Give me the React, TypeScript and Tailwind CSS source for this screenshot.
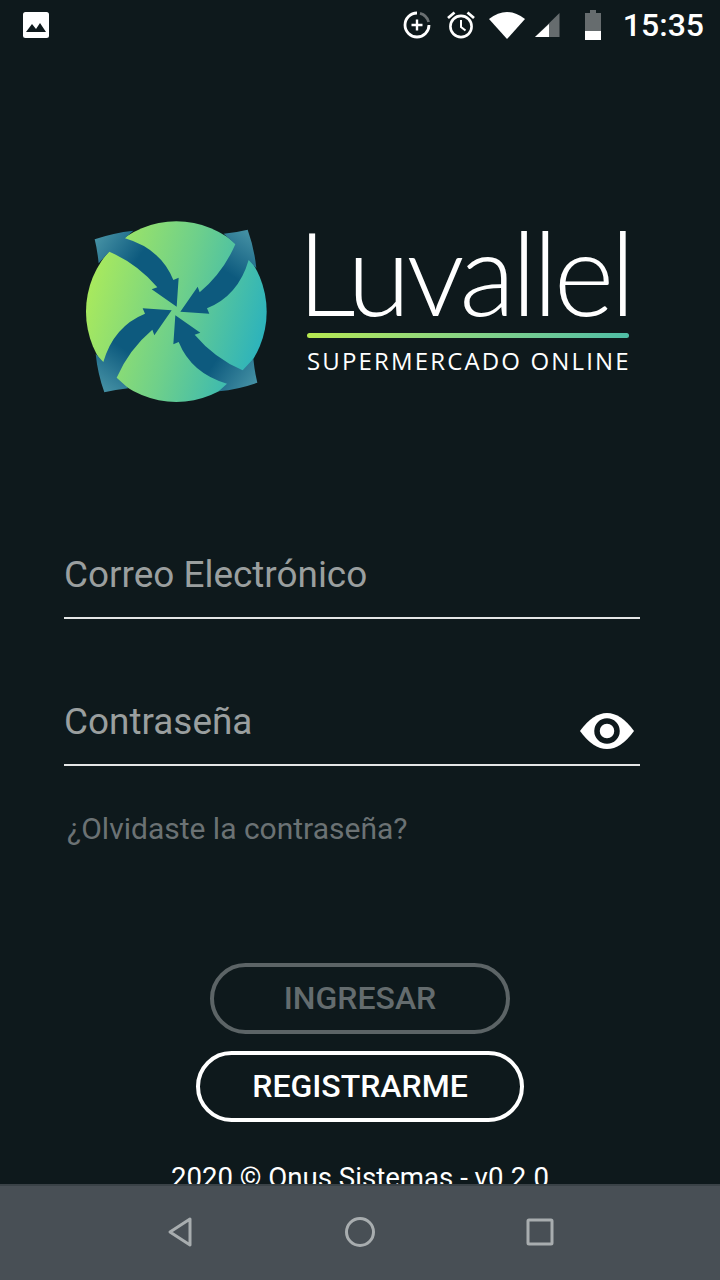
import React from "react";

const Mark = () => (
  <svg viewBox="0 0 630 600" className="w-[210px] h-[200px] block">
    <defs>
      <linearGradient id="globe" x1="48" y1="230" x2="590" y2="370" gradientUnits="userSpaceOnUse">
        <stop offset="0" stopColor="#aaea5c" />
        <stop offset="0.5" stopColor="#6fd08a" />
        <stop offset="1" stopColor="#2bb2bd" />
      </linearGradient>
      <linearGradient id="arrow" x1="85" y1="85" x2="195" y2="160" gradientUnits="userSpaceOnUse">
        <stop offset="0" stopColor="#438fa3" />
        <stop offset="1" stopColor="#0d5a7e" />
      </linearGradient>
    </defs>
    <circle cx="319" cy="305" r="271" fill="url(#globe)" />
    {[0, 90, 180, 270].map((r) => (
      <path
        key={r}
        transform={`rotate(${r} 318 303)`}
        fill="url(#arrow)"
        d="M74 88 Q130 68 190 62 L165 85 Q272 116 310 210 L326 203 L320 290 L245 238 L262 232 Q203 162 118 125 L86 160 Q82 120 74 88 Z"
      />
    ))}
  </svg>
);

const StatusIcons = () => (
  <div className="flex items-center">
    <svg viewBox="0 0 30 30" className="w-[30px] h-[30px]">
      <path d="M15 3 A12 12 0 1 0 27 15" fill="none" stroke="#fff" strokeWidth="2.8" />
      <path d="M18 3.4 A12 12 0 0 1 26.6 12" fill="none" stroke="#6a7072" strokeWidth="2.8" />
      <path d="M15 9.5v11M9.5 15h11" stroke="#fff" strokeWidth="2.4" />
    </svg>
    <svg viewBox="0 0 30 30" className="w-[30px] h-[30px] ml-[14px]">
      <circle cx="15" cy="16.5" r="10.6" fill="none" stroke="#fff" strokeWidth="2.6" />
      <path d="M15 10v7l4.5 3.5" fill="none" stroke="#fff" strokeWidth="2" />
      <path d="M2 8l6.5-5.5M28 8l-6.5-5.5" stroke="#fff" strokeWidth="2.8" />
    </svg>
    <svg viewBox="0 0 36 30" className="w-[36px] h-[30px] ml-[13px]">
      <path d="M0 9 Q18 -5 36 9 L18 29 Z" fill="#fff" />
    </svg>
    <svg viewBox="0 0 26 30" className="w-[26px] h-[30px] ml-[9px]">
      <path d="M25.5 3 V27 H1 Z" fill="#666c6e" />
      <path d="M15 14 V27 H1 Z" fill="#fff" />
    </svg>
    <svg viewBox="0 0 18 30" className="w-[18px] h-[30px] ml-[24px]">
      <path d="M6 0h6v3h5v27H1V3h5z" fill="#666c6e" />
      <rect x="1" y="21" width="16" height="9" fill="#fff" />
    </svg>
    <span className="ml-[21px] text-[32px] leading-none font-medium text-white">15:35</span>
  </div>
);

export default function App() {
  return (
    <div className="w-[720px] h-[1280px] flex flex-col bg-[#0e191c] overflow-hidden [font-family:Roboto,sans-serif]">
      <div className="h-[1184px] shrink-0 overflow-hidden">
        <div className="h-[50px] flex items-center justify-between pl-[23px] pr-[16px] pb-[1px]">
          <svg viewBox="0 0 26 26" className="w-[26px] h-[26px]">
            <rect width="26" height="26" rx="2.5" fill="#fff" />
            <path d="M3 20 L9 12 L13 17 L17 11 L23 20 Z" fill="#0e191c" />
          </svg>
          <StatusIcons />
        </div>

        <div className="mt-[160px] h-[200px] flex pl-[70px]">
          <Mark />
          <div className="ml-[27px] w-[322px] flex flex-col">
            <div className="h-[115px] -ml-[10px] mt-[4px] text-[116px] leading-[115px] font-light tracking-[-4.3px] text-white [font-family:Lato,sans-serif] whitespace-nowrap">Luvallel</div>
            <div className="h-[5px] rounded-full mt-[4px] bg-gradient-to-r from-[#b6e84f] to-[#4fbea6]" />
            <div className="mt-[8px] text-[24px] leading-[30px] text-white tracking-[2.15px] whitespace-nowrap [font-family:'Open_Sans',sans-serif]">SUPERMERCADO ONLINE</div>
          </div>
        </div>

        <div className="mt-[132px] pl-[64px] pr-[80px] flex flex-col">
          <div className="h-[77px] border-b-2 border-[#e4e6e6] flex items-start pt-[8px]">
            <span className="text-[36.9px] leading-[50px] text-[#9a9f9f]">Correo Electrónico</span>
          </div>
          <div className="mt-[70px] h-[77px] border-b-2 border-[#e4e6e6] flex items-start justify-between pt-[8px]">
            <span className="text-[36.9px] leading-[50px] text-[#9a9f9f]">Contraseña</span>
            <svg viewBox="0 0 56 38" className="w-[56px] h-[38px] mt-[15px] mr-[5px]">
              <path d="M1 19 Q14 1 28 1 Q42 1 55 19 Q42 37 28 37 Q14 37 1 19 Z" fill="#fff" />
              <circle cx="28" cy="19" r="10" fill="#fff" stroke="#0e191c" strokeWidth="5.5" />
            </svg>
          </div>
          <div className="mt-[43px] pl-[3px] text-[30px] leading-[40px] text-[#6b7274]">¿Olvidaste la contraseña?</div>
        </div>

        <div className="mt-[114px] flex flex-col items-center">
          <div className="w-[300px] h-[71px] pb-[2px] rounded-full border-[4px] border-[#5c6466] flex items-center justify-center text-[32px] font-medium text-[#646c6e]">INGRESAR</div>
          <div className="mt-[17px] w-[328px] h-[71px] pb-[2px] rounded-full border-[4px] border-white flex items-center justify-center text-[32px] font-medium text-white">REGISTRARME</div>
          <div className="mt-[40px] text-[27.6px] leading-[32px] text-white whitespace-nowrap">2020 © Onus Sistemas - v0.2.0</div>
        </div>
      </div>

      <div className="h-[96px] bg-[#484f55] border-t-2 border-[#3a4247] grid grid-cols-[180px_180px_180px] justify-center items-center justify-items-center pb-[2px]">
        <svg viewBox="0 0 28 32" className="w-[28px] h-[32px]">
          <path d="M24 3 L4 16 L24 29 Z" fill="none" stroke="#a8adaf" strokeWidth="3" strokeLinejoin="round" />
        </svg>
        <svg viewBox="0 0 32 32" className="w-[32px] h-[32px]">
          <circle cx="16" cy="16" r="13.5" fill="none" stroke="#a8adaf" strokeWidth="3" />
        </svg>
        <svg viewBox="0 0 28 28" className="w-[28px] h-[28px]">
          <rect x="2" y="2" width="24" height="24" rx="1" fill="none" stroke="#a8adaf" strokeWidth="3" />
        </svg>
      </div>
    </div>
  );
}
